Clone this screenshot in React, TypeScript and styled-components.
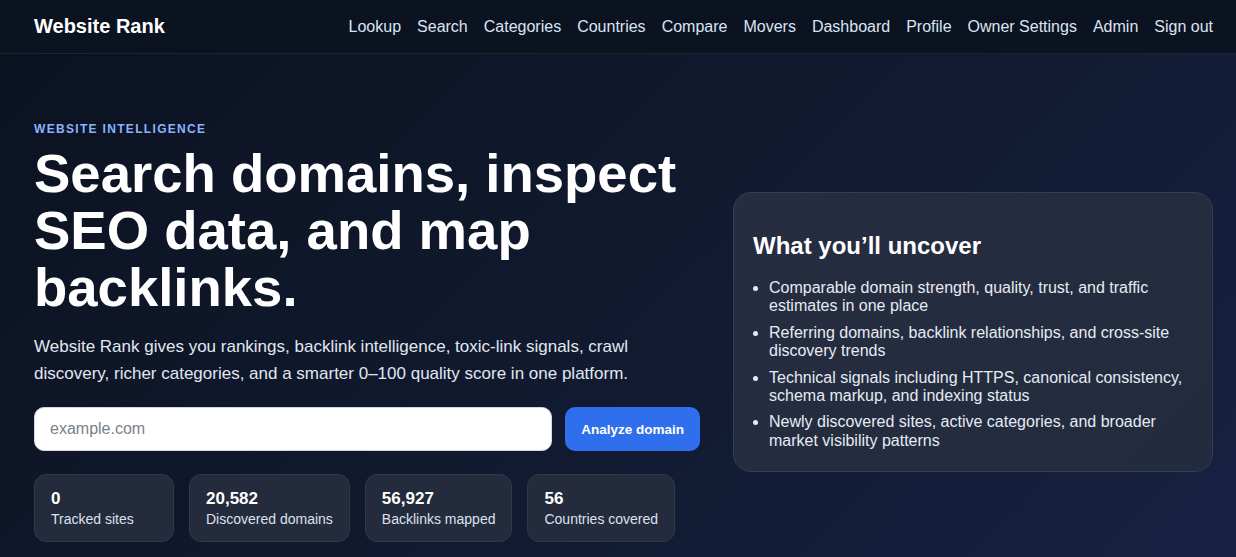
import styled, { createGlobalStyle } from "styled-components";

const GlobalStyle = createGlobalStyle`
  * { box-sizing: border-box; }
  html, body { margin: 0; padding: 0; }
  body {
    font-family: "Liberation Sans", Arial, sans-serif;
    background: #0c1322;
    color: #e5e9f2;
  }
`;

const Page = styled.div`
  min-height: 557px;
  background: linear-gradient(135deg, #0b1220 0%, #111a30 55%, #172142 100%);
`;

const Header = styled.header`
  display: flex;
  align-items: center;
  justify-content: space-between;
  height: 54px;
  padding: 0 23px 0 34px;
  background: #0b1220;
  border-bottom: 1px solid #1c2333;
`;

const Logo = styled.a`
  font-size: 20px;
  font-weight: 700;
  color: #ffffff;
  text-decoration: none;
`;

const Nav = styled.nav`
  display: flex;
  gap: 16px;
`;

const NavLink = styled.a`
  font-size: 16px;
  color: #dbe4f3;
  text-decoration: none;
`;

const Hero = styled.main`
  display: grid;
  grid-template-columns: minmax(0, 666fr) minmax(0, 480fr);
  gap: 33px;
  align-items: center;
  padding: 68px 23px 0 34px;
`;

const Intro = styled.section`
  display: flex;
  flex-direction: column;
`;

const Eyebrow = styled.p`
  margin: 0;
  font-size: 12px;
  font-weight: 700;
  letter-spacing: 0.11em;
  color: #8cb2ff;
  text-transform: uppercase;
`;

const Title = styled.h1`
  margin: 9px 0 0;
  font-size: 54.5px;
  line-height: 57px;
  font-weight: 700;
  color: #ffffff;
`;

const Lead = styled.p`
  margin: 17px 0 0;
  font-size: 17px;
  line-height: 27px;
  color: #e1e7f0;
`;

const SearchForm = styled.form`
  display: flex;
  gap: 13px;
  margin-top: 20px;
`;

const DomainInput = styled.input`
  flex: 1;
  height: 44px;
  padding: 0 15px;
  border: 1px solid #d4d8e0;
  border-radius: 10px;
  background: #ffffff;
  font-family: inherit;
  font-size: 16px;
  color: #1a2030;
  &::placeholder { color: #7a808c; }
`;

const AnalyzeButton = styled.button`
  height: 44px;
  padding: 0 16px;
  border: 0;
  border-radius: 10px;
  background: #2f6fed;
  color: #ffffff;
  font-family: inherit;
  font-size: 13.5px;
  font-weight: 700;
`;

const Stats = styled.div`
  display: flex;
  gap: 15px;
  margin-top: 23px;
`;

const StatCard = styled.div`
  display: flex;
  flex-direction: column;
  gap: 1px;
  min-width: 140px;
  padding: 14px 16px 13px;
  border: 1px solid #30384a;
  border-radius: 12px;
  background: #242b3d;
`;

const StatValue = styled.strong`
  font-size: 17px;
  line-height: 20px;
  font-weight: 700;
  color: #ffffff;
`;

const StatLabel = styled.span`
  font-size: 14px;
  line-height: 18px;
  color: #dbe2ee;
`;

const Panel = styled.aside`
  padding: 38px 19px 21px;
  border: 1px solid #353d50;
  border-radius: 18px;
  background: linear-gradient(135deg, #262d40 0%, #232b3f 100%);
`;

const PanelTitle = styled.h2`
  margin: 0;
  font-size: 24px;
  line-height: 30px;
  font-weight: 700;
  color: #ffffff;
`;

const List = styled.ul`
  margin: 18px 0 0;
  padding-left: 16px;
  display: flex;
  flex-direction: column;
  gap: 8px;
`;

const Item = styled.li`
  font-size: 16px;
  line-height: 1.15;
  color: #e6ebf3;
`;

const navItems = [
  "Lookup",
  "Search",
  "Categories",
  "Countries",
  "Compare",
  "Movers",
  "Dashboard",
  "Profile",
  "Owner Settings",
  "Admin",
  "Sign out",
];

const stats = [
  { value: "0", label: "Tracked sites" },
  { value: "20,582", label: "Discovered domains" },
  { value: "56,927", label: "Backlinks mapped" },
  { value: "56", label: "Countries covered" },
];

const findings = [
  "Comparable domain strength, quality, trust, and traffic estimates in one place",
  "Referring domains, backlink relationships, and cross-site discovery trends",
  "Technical signals including HTTPS, canonical consistency, schema markup, and indexing status",
  "Newly discovered sites, active categories, and broader market visibility patterns",
];

export default function App() {
  return (
    <>
      <GlobalStyle />
      <Page>
        <Header>
          <Logo href="#">Website Rank</Logo>
          <Nav>
            {navItems.map((item) => (
              <NavLink key={item} href="#">
                {item}
              </NavLink>
            ))}
          </Nav>
        </Header>
        <Hero>
          <Intro>
            <Eyebrow>Website intelligence</Eyebrow>
            <Title>Search domains, inspect SEO data, and map backlinks.</Title>
            <Lead>
              Website Rank gives you rankings, backlink intelligence, toxic-link
              signals, crawl discovery, richer categories, and a smarter 0–100
              quality score in one platform.
            </Lead>
            <SearchForm onSubmit={(e) => e.preventDefault()}>
              <DomainInput placeholder="example.com" />
              <AnalyzeButton type="submit">Analyze domain</AnalyzeButton>
            </SearchForm>
            <Stats>
              {stats.map((s) => (
                <StatCard key={s.label}>
                  <StatValue>{s.value}</StatValue>
                  <StatLabel>{s.label}</StatLabel>
                </StatCard>
              ))}
            </Stats>
          </Intro>
          <Panel>
            <PanelTitle>What you’ll uncover</PanelTitle>
            <List>
              {findings.map((f) => (
                <Item key={f}>{f}</Item>
              ))}
            </List>
          </Panel>
        </Hero>
      </Page>
    </>
  );
}
